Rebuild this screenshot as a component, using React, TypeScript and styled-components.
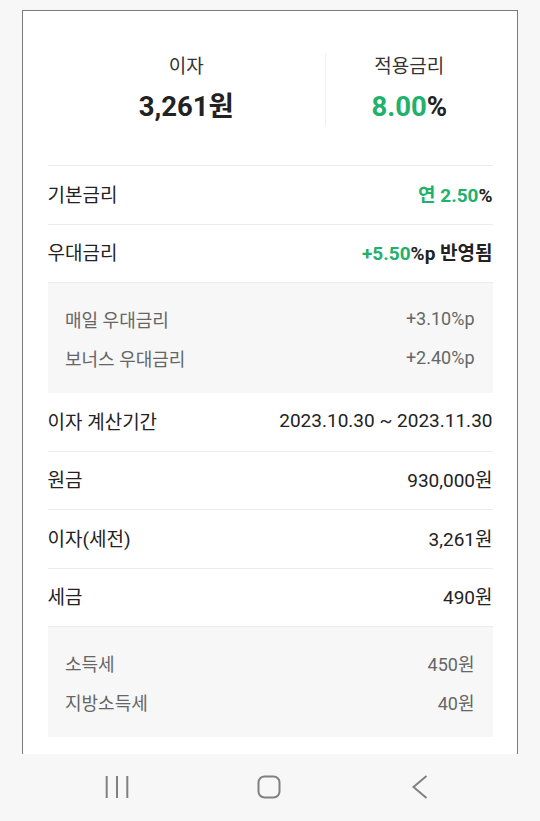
import React from "react";
import styled, { createGlobalStyle } from "styled-components";

const GlobalStyle = createGlobalStyle`
  html, body {
    margin: 0;
    padding: 0;
    background: #f7f7f7;
    font-family: Roboto, "Noto Sans CJK KR", "Noto Sans", sans-serif;
    color: #222;
  }
`;

const GREEN = "#20b26c";

const Page = styled.div`
  display: flex;
  flex-direction: column;
  height: 821px;
  overflow: hidden;
  padding-top: 10px;
  box-sizing: border-box;
`;

const Card = styled.div`
  flex: 1;
  overflow: hidden;
  margin: 0 22px;
  background: #fff;
  border: 1.5px solid #7a7a7a;
  border-bottom: none;
  padding: 0 24.5px;
`;

const Summary = styled.div`
  display: flex;
  padding: 42px 0 39px;
  border-bottom: 1px solid #ececec;
`;

const SummaryItem = styled.div<{ $grow: number; $divider?: boolean }>`
  flex: ${({ $grow }) => $grow};
  display: flex;
  flex-direction: column;
  align-items: center;
  gap: 7px;
  ${({ $divider }) => ($divider ? "border-left: 1px solid #f0f0f0;" : "")}
`;

const SummaryLabel = styled.div`
  font-size: 19px;
  line-height: 28px;
  color: #333;
`;

const SummaryValue = styled.div`
  font-size: 27.5px;
  line-height: 38px;
  font-weight: 700;
  color: #222;
`;

const Green = styled.span`
  color: ${GREEN};
`;

const Row = styled.div`
  display: flex;
  justify-content: space-between;
  align-items: center;
  box-sizing: border-box;
  height: 58.5px;
  padding-bottom: 3px;
  font-size: 19px;
  border-bottom: 1px solid #ececec;
  &:last-child {
    border-bottom: none;
  }
`;

const RowValue = styled.span<{ $bold?: boolean }>`
  font-weight: ${({ $bold }) => ($bold ? 700 : 400)};
`;

const SubBox = styled.div`
  background: #f7f7f7;
  padding: 16px 18px 16px 17.5px;
`;

const SubRow = styled.div`
  display: flex;
  justify-content: space-between;
  align-items: center;
  height: 39px;
  font-size: 18px;
  color: #666;
`;

const NavBar = styled.div`
  height: 67px;
  flex-shrink: 0;
  background: #f7f7f7;
  display: flex;
  align-items: center;
  gap: 127.5px;
  padding-left: 105px;
`;

const NavIcon = styled.svg`
  display: block;
  margin-top: -2px;
`;

const subBonus = [
  ["매일 우대금리", "+3.10%p"],
  ["보너스 우대금리", "+2.40%p"],
];

const subTax = [
  ["소득세", "450원"],
  ["지방소득세", "40원"],
];

export default function App() {
  return (
    <>
      <GlobalStyle />
      <Page>
        <Card>
          <Summary>
            <SummaryItem $grow={5}>
              <SummaryLabel>이자</SummaryLabel>
              <SummaryValue>3,261원</SummaryValue>
            </SummaryItem>
            <SummaryItem $grow={3} $divider>
              <SummaryLabel>적용금리</SummaryLabel>
              <SummaryValue>
                <Green>8.00</Green>%
              </SummaryValue>
            </SummaryItem>
          </Summary>
          <Row>
            <span>기본금리</span>
            <RowValue $bold>
              <Green>연 2.50</Green>%
            </RowValue>
          </Row>
          <Row>
            <span>우대금리</span>
            <RowValue $bold>
              <Green>+5.50</Green>%p 반영됨
            </RowValue>
          </Row>
          <SubBox>
            {subBonus.map(([k, v]) => (
              <SubRow key={k}>
                <span>{k}</span>
                <span>{v}</span>
              </SubRow>
            ))}
          </SubBox>
          <Row>
            <span>이자 계산기간</span>
            <RowValue>2023.10.30 ~ 2023.11.30</RowValue>
          </Row>
          <Row>
            <span>원금</span>
            <RowValue>930,000원</RowValue>
          </Row>
          <Row>
            <span>이자(세전)</span>
            <RowValue>3,261원</RowValue>
          </Row>
          <Row>
            <span>세금</span>
            <RowValue>490원</RowValue>
          </Row>
          <SubBox>
            {subTax.map(([k, v]) => (
              <SubRow key={k}>
                <span>{k}</span>
                <span>{v}</span>
              </SubRow>
            ))}
          </SubBox>
        </Card>
        <NavBar>
          <NavIcon width="24" height="24" viewBox="0 0 24 24">
            <g stroke="#808080" strokeWidth="2">
              <line x1="1.7" y1="1" x2="1.7" y2="23" />
              <line x1="12" y1="1" x2="12" y2="23" />
              <line x1="22.3" y1="1" x2="22.3" y2="23" />
            </g>
          </NavIcon>
          <NavIcon width="24" height="24" viewBox="0 0 24 24">
            <rect x="1.5" y="1.5" width="21" height="21" rx="6" fill="none" stroke="#808080" strokeWidth="2" />
          </NavIcon>
          <NavIcon width="24" height="24" viewBox="0 0 24 24">
            <polyline points="18.5,1 5.5,12 18.5,23" fill="none" stroke="#808080" strokeWidth="2" />
          </NavIcon>
        </NavBar>
      </Page>
    </>
  );
}
